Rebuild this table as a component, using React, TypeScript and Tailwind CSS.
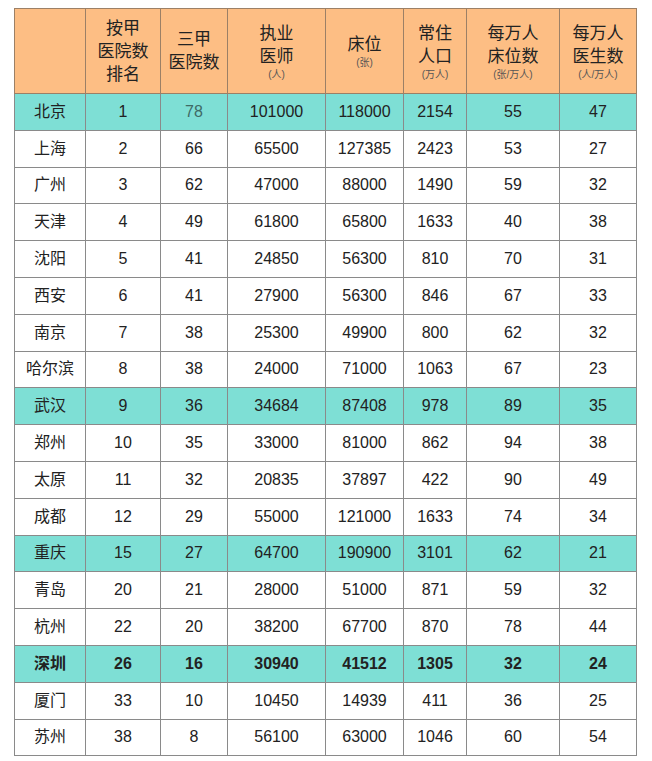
const rows: { city: string; v: (string | number)[]; hi?: boolean; bold?: boolean }[] = [
  { city: "北京", v: [1, 78, 101000, 118000, 2154, 55, 47], hi: true },
  { city: "上海", v: [2, 66, 65500, 127385, 2423, 53, 27] },
  { city: "广州", v: [3, 62, 47000, 88000, 1490, 59, 32] },
  { city: "天津", v: [4, 49, 61800, 65800, 1633, 40, 38] },
  { city: "沈阳", v: [5, 41, 24850, 56300, 810, 70, 31] },
  { city: "西安", v: [6, 41, 27900, 56300, 846, 67, 33] },
  { city: "南京", v: [7, 38, 25300, 49900, 800, 62, 32] },
  { city: "哈尔滨", v: [8, 38, 24000, 71000, 1063, 67, 23] },
  { city: "武汉", v: [9, 36, 34684, 87408, 978, 89, 35], hi: true },
  { city: "郑州", v: [10, 35, 33000, 81000, 862, 94, 38] },
  { city: "太原", v: [11, 32, 20835, 37897, 422, 90, 49] },
  { city: "成都", v: [12, 29, 55000, 121000, 1633, 74, 34] },
  { city: "重庆", v: [15, 27, 64700, 190900, 3101, 62, 21], hi: true },
  { city: "青岛", v: [20, 21, 28000, 51000, 871, 59, 32] },
  { city: "杭州", v: [22, 20, 38200, 67700, 870, 78, 44] },
  { city: "深圳", v: [26, 16, 30940, 41512, 1305, 32, 24], hi: true, bold: true },
  { city: "厦门", v: [33, 10, 10450, 14939, 411, 36, 25] },
  { city: "苏州", v: [38, 8, 56100, 63000, 1046, 60, 54] },
]

const headers: { lines: string[]; unit?: string }[] = [
  { lines: [] },
  { lines: ["按甲", "医院数", "排名"] },
  { lines: ["三甲", "医院数"] },
  { lines: ["执业", "医师"], unit: "(人)" },
  { lines: ["床位"], unit: "(张)" },
  { lines: ["常住", "人口"], unit: "(万人)" },
  { lines: ["每万人", "床位数"], unit: "(张/万人)" },
  { lines: ["每万人", "医生数"], unit: "(人/万人)" },
]

const widths = ["w-[71px]", "w-[75px]", "w-[67px]", "w-[98px]", "w-[78px]", "w-[63px]", "w-[93px]", "w-[77px]"]

export default function App() {
  return (
    <div
      className="min-h-[761px] bg-white pl-[14px] pt-[8px] text-[#222]"
      style={{ fontFamily: '"Liberation Sans", "Noto Sans CJK SC", sans-serif' }}
    >
      <table className="w-[622px] table-fixed border-collapse border border-[#8a8a8a]">
        <colgroup>
          {widths.map((w) => (
            <col key={w} className={w} />
          ))}
        </colgroup>
        <thead>
          <tr className="h-[85px] bg-[#fdbe84]">
            {headers.map((h, i) => (
              <th key={i} className="border border-[#9c8066] p-0 text-center align-middle font-normal">
                {h.lines.map((l) => (
                  <div key={l} className="text-[17px] leading-[23px]">
                    {l}
                  </div>
                ))}
                {h.unit && <div className="text-[10px] leading-[13px] text-[#555]">{h.unit}</div>}
              </th>
            ))}
          </tr>
        </thead>
        <tbody>
          {rows.map((r) => (
            <tr key={r.city} className={`h-[36.8px] ${r.hi ? "bg-[#7edfd5]" : "bg-white"}`}>
              <td
                className={`border border-[#8a8a8a] p-0 text-center text-[16px] ${r.bold ? "font-bold" : ""}`}
              >
                {r.city}
              </td>
              {r.v.map((x, i) => (
                <td
                  key={i}
                  className={`border border-[#8a8a8a] p-0 text-center text-[16px] ${r.bold ? "font-bold" : ""} ${
                    r.city === "北京" && i === 1 ? "text-[#3e6b66]" : ""
                  }`}
                >
                  {x}
                </td>
              ))}
            </tr>
          ))}
        </tbody>
      </table>
    </div>
  )
}
